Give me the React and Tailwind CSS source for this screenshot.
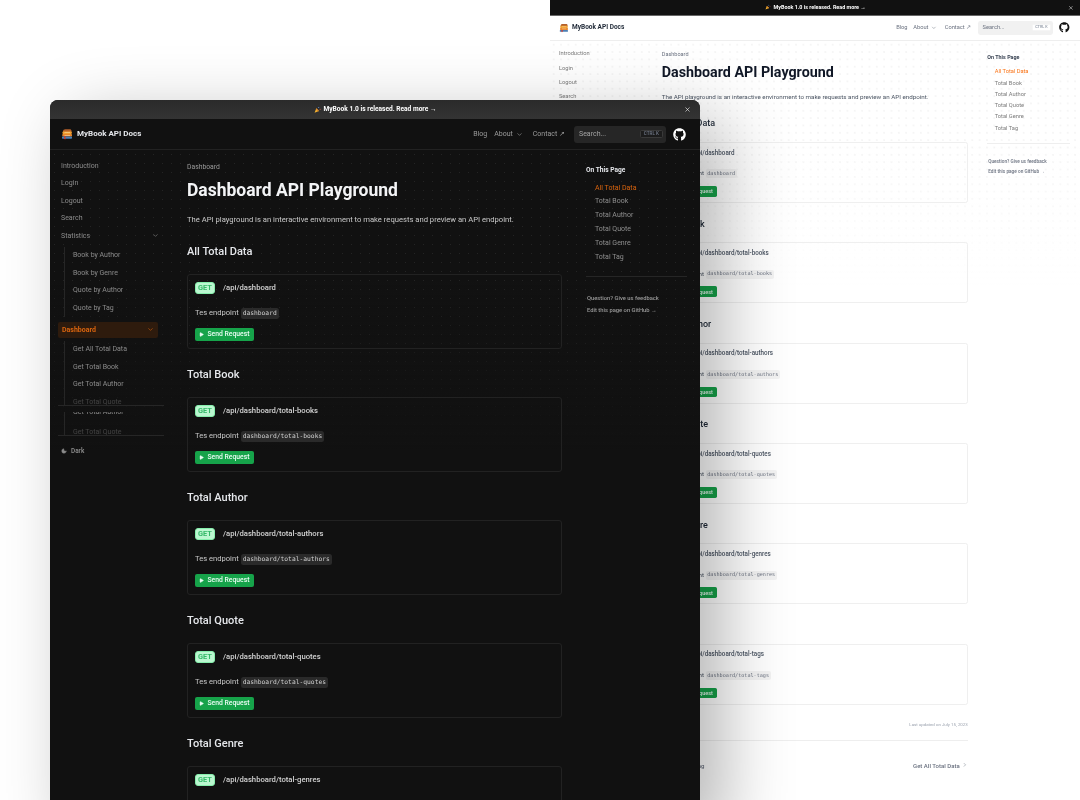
import { ChevronDown, ChevronLeft, ChevronRight, Moon, Play, X } from 'lucide-react'
import { FaGithub } from 'react-icons/fa'

const SECTIONS = [
  { title: 'All Total Data', path: 'dashboard' },
  { title: 'Total Book', path: 'dashboard/total-books' },
  { title: 'Total Author', path: 'dashboard/total-authors' },
  { title: 'Total Quote', path: 'dashboard/total-quotes' },
  { title: 'Total Genre', path: 'dashboard/total-genres' },
  { title: 'Total Tag', path: 'dashboard/total-tags' },
]

const THEMES = {
  dark: {
    shell: 'bg-[#111111]',
    banner: 'bg-[linear-gradient(to_bottom,#2a2a2a,#343434)]',
    nav: 'border-[#222222]',
    brand: 'text-[#e5e7eb]',
    navLink: 'text-[#9a9a9a]',
    search: 'bg-[#262626] text-[#a3a3a3]',
    kbd: 'border-[#3a3a3a] bg-[#1c1c1c] text-[#6b7280]',
    github: 'text-white',
    body: 'bg-[linear-gradient(to_bottom,transparent,transparent_130px,#111111_300px),radial-gradient(circle,#242424_0.6px,transparent_0.9px)]',
    side: 'text-[#8b8b8b]',
    subLine: 'border-[#262626]',
    active: 'bg-[#2e1b0d] text-[#d9640f]',
    rule: 'border-[#262626]',
    crumb: 'text-[#9a9a9a]',
    h1: 'text-[#f3f4f6]',
    text: 'text-[#c9c9c9]',
    h2: 'text-[#e5e7eb]',
    card: 'border-[#222222]',
    path: 'text-[#d4d4d4]',
    code: 'bg-[#2a2a2a] text-[#cfcfcf]',
    tocTitle: 'text-[#e5e7eb]',
    tocLink: 'text-[#8f8f8f]',
    tocActive: 'text-[#d9640f]',
    foot: 'text-[#9a9a9a]',
    muted: 'text-[#6b7280]',
    pager: 'text-[#b8b8b8]',
  },
  light: {
    shell: 'bg-white',
    banner: 'border-b border-[#666666] bg-[#111111]',
    nav: 'border-[#eeeeee]',
    brand: 'text-[#1f2937]',
    navLink: 'text-[#6b7280]',
    search: 'bg-[#f1f1f1] text-[#6b7280]',
    kbd: 'border-[#f5f5f5] bg-white text-[#9ca3af]',
    github: 'text-[#111111]',
    body: 'bg-[linear-gradient(to_bottom,transparent,transparent_130px,#ffffff_300px),radial-gradient(circle,#e4e4e4_0.6px,transparent_0.9px)]',
    side: 'text-[#7b7b7b]',
    subLine: 'border-[#eeeeee]',
    active: 'bg-[#ffedd5] text-[#ea6a12]',
    rule: 'border-[#eeeeee]',
    crumb: 'text-[#6b7280]',
    h1: 'text-[#111827]',
    text: 'text-[#4b5563]',
    h2: 'text-[#1f2937]',
    card: 'border-[#efefef]',
    path: 'text-[#4b5563]',
    code: 'bg-[#f3f3f3] text-[#6b7280]',
    tocTitle: 'text-[#374151]',
    tocLink: 'text-[#7b7b7b]',
    tocActive: 'text-[#f97316]',
    foot: 'text-[#6b7280]',
    muted: 'text-[#9ca3af]',
    pager: 'text-[#6b7280]',
  },
}

function BookLogo() {
  return (
    <svg viewBox="0 0 24 24" className="h-[12px] w-[12px] shrink-0">
      <path d="M4 6.5C4 4 6 2.5 8.5 2.5h9c2 0 3.5 1.2 3.5 3.5v2H4z" fill="#b4602a" />
      <rect x="3" y="7" width="18.5" height="5" rx="1.5" fill="#f0a030" />
      <rect x="2.5" y="12" width="19.5" height="5" rx="1.5" fill="#e8852a" />
      <rect x="2" y="17" width="20" height="4.5" rx="1.5" fill="#4a7fb5" />
      <rect x="7" y="9" width="11" height="1" fill="#fde9c0" />
      <rect x="7" y="14" width="11" height="1" fill="#fde9c0" />
      <path d="M6 17h3v6l-1.500-1.500L6 23z" fill="#d8392b" />
    </svg>
  )
}

function Popper() {
  return (
    <svg viewBox="0 0 12 12" className="h-[7px] w-[7px] shrink-0">
      <path d="M1 11.500 4 4l4.500 4.500z" fill="#f5b32e" />
      <path d="M4 4l4.500 4.500L6.800 9.300 3.400 5.600z" fill="#d9822b" />
      <circle cx="8" cy="2.500" r="1" fill="#5b8dd6" />
      <circle cx="10.500" cy="5.500" r="0.900" fill="#e05c4b" />
    </svg>
  )
}

function SideRow({ children, sub, dim, chevron, t }) {
  return (
    <div className={`flex h-[17.5px] items-center justify-between pr-[5px] text-[7px] ${sub ? 'pl-[8px]' : 'pl-[3px]'} ${dim ? 'opacity-40' : ''} ${t.side}`}>
      <span>{children}</span>
      {chevron && <ChevronDown className="h-[7px] w-[7px]" />}
    </div>
  )
}

function Sidebar({ t }) {
  return (
    <aside className="w-[114px] shrink-0 pl-[8px] pt-[7px]">
      <div className="h-[248px] overflow-hidden">
        {['Introduction', 'Login', 'Logout', 'Search'].map((x) => <SideRow key={x} t={t}>{x}</SideRow>)}
        <SideRow t={t} chevron>Statistics</SideRow>
        <div className={`ml-[6px] mt-[2px] border-l ${t.subLine}`}>
          {['Book by Author', 'Book by Genre', 'Quote by Author', 'Quote by Tag'].map((x) => <SideRow key={x} t={t} sub>{x}</SideRow>)}
        </div>
        <div className={`mt-[5.5px] flex h-[15.5px] w-[100px] items-center justify-between rounded-[2px] px-[4px] text-[7px] font-bold ${t.active}`}>
          <span>Dashboard</span>
          <ChevronDown className="h-[7px] w-[7px]" />
        </div>
        <div className={`ml-[6px] mt-[3px] border-l ${t.subLine}`}>
          {['Get All Total Data', 'Get Total Book', 'Get Total Author'].map((x) => <SideRow key={x} t={t} sub>{x}</SideRow>)}
          <SideRow t={t} sub dim>Get Total Quote</SideRow>
        </div>
      </div>
      {/* second copy of the list peeks out under the first rule */}
      <div className={`h-[31px] border-y pt-[6px] ${t.rule}`}>
        <div className="h-[23px] overflow-hidden">
          <div className={`-mt-[9px] ml-[6px] border-l ${t.subLine}`}>
            <SideRow t={t} sub>Get Total Author</SideRow>
            <div className="pt-[3px]">
              <SideRow t={t} sub dim>Get Total Quote</SideRow>
            </div>
          </div>
        </div>
      </div>
      <div className={`mt-[10.5px] flex items-center gap-[4px] pl-[3px] text-[6.4px] font-semibold ${t.side}`}>
        <Moon className="h-[6px] w-[6px]" fill="currentColor" />
        <span>Dark</span>
      </div>
    </aside>
  )
}

function EndpointCard({ path, t }) {
  return (
    <div className={`mt-[16px] h-[75px] rounded-[3px] border px-[7px] pt-[7px] ${t.card}`}>
      <div className="flex h-[12px] items-center gap-[8px]">
        <span className="flex h-[12px] w-[20px] items-center justify-center rounded-[3px] border border-[#86efac] bg-[#bbf7d0] text-[7.4px] font-bold text-[#34b868]">GET</span>
        <span className={`text-[7.7px] font-medium ${t.path}`}>/api/{path}</span>
      </div>
      <div className="mt-[13px] flex h-[12px] items-center gap-[2px]">
        <span className={`text-[7.6px] ${t.text}`}>Tes endpoint</span>
        <code className={`flex h-[11px] items-center rounded-[2.5px] px-[2px] font-['DejaVu_Sans_Mono',monospace] text-[6.3px] ${t.code}`}>{path}</code>
      </div>
      <button className="mt-[9px] flex h-[13px] w-[59px] items-center justify-center gap-[3px] rounded-[2px] bg-[#16a34a] text-[6.8px] font-medium text-[#ecfdf5]">
        <Play className="h-[5px] w-[5px]" fill="currentColor" />
        Send Request
      </button>
    </div>
  )
}

function Toc({ t }) {
  return (
    <aside className="ml-[24px] w-[101px] shrink-0 pt-[16px]">
      <div className={`text-[6.6px] font-bold leading-[8px] ${t.tocTitle}`}>On This Page</div>
      <div className="mt-[7px] pl-[9px] text-[7px]">
        {SECTIONS.map((s, i) => (
          <div key={s.title} className={`flex h-[13.8px] items-center ${i === 0 ? t.tocActive : t.tocLink}`}>{s.title}</div>
        ))}
      </div>
      <div className={`mt-[12px] border-t ${t.rule}`} />
      <div className={`mt-[15px] pl-[1px] text-[5.8px] font-medium leading-[12.4px] ${t.foot}`}>
        <div>Question? Give us feedback</div>
        <div>Edit this page on GitHub →</div>
      </div>
    </aside>
  )
}

function DocsWindow({ theme, className }) {
  const t = THEMES[theme]
  return (
    <div className={`flex flex-col overflow-hidden font-['Roboto',sans-serif] blur-[0.2px] [will-change:transform] ${t.shell} ${className}`}>
      <div className={`relative flex h-[19px] shrink-0 items-center justify-center gap-[3px] text-[6.6px] font-bold text-white ${t.banner}`}>
        <Popper />
        <span>MyBook 1.0 is released. Read more →</span>
        <X className="absolute right-[9px] top-[6px] h-[7px] w-[7px]" />
      </div>
      <nav className={`flex h-[31px] shrink-0 items-center border-b pl-[11px] pr-[14px] ${t.nav}`}>
        <BookLogo />
        <span className={`ml-[4px] text-[8px] font-bold ${t.brand}`}>MyBook API Docs</span>
        <div className={`ml-auto flex items-center text-[7px] ${t.navLink}`}>
          <span>Blog</span>
          <span className="ml-[7px]">About</span>
          <ChevronDown className="ml-[3px] h-[7px] w-[7px]" />
          <span className="ml-[10px]">Contact ↗</span>
        </div>
        <div className={`ml-[9px] flex h-[17px] w-[92px] items-center justify-between rounded-[3px] pl-[5px] pr-[3px] text-[7px] ${t.search}`}>
          <span>Search...</span>
          <kbd className={`flex h-[8px] items-center rounded-[1.5px] border px-[3px] font-['Roboto',sans-serif] text-[4.6px] font-semibold ${t.kbd}`}>CTRL K</kbd>
        </div>
        <FaGithub className={`ml-[7px] h-[13px] w-[13px] ${t.github}`} />
      </nav>
      <div className={`flex flex-1 bg-[length:100%_100%,9px_9px] ${t.body}`}>
        <Sidebar t={t} />
        <main className="ml-[23px] w-[375px] shrink-0">
          <div className={`mt-[13px] h-[8px] text-[6.8px] leading-[8px] ${t.crumb}`}>Dashboard</div>
          <h1 className={`mt-[8px] h-[22px] text-[17.5px] font-bold leading-[22px] ${t.h1}`}>Dashboard API Playground</h1>
          <p className={`mt-[13px] h-[12px] text-[7.65px] leading-[12px] ${t.text}`}>The API playground is an interactive environment to make requests and preview an API endpoint.</p>
          {SECTIONS.map((s) => (
            <section key={s.title} className="mt-[18px]">
              <h2 className={`h-[14px] text-[11px] font-medium leading-[16px] ${t.h2}`}>{s.title}</h2>
              <EndpointCard path={s.path} t={t} />
            </section>
          ))}
          <div className={`mt-[21px] text-right text-[5.4px] ${t.muted}`}>Last updated on July 15, 2023</div>
          <div className={`mt-[14px] border-t ${t.rule}`} />
          <div className={`mt-[24px] flex items-center justify-between text-[7.4px] font-medium ${t.pager}`}>
            <span className="flex items-center gap-[2px]"><ChevronLeft className="h-[7px] w-[7px]" />Get Total Tag</span>
            <span className="flex items-center gap-[3px]">Get All Total Data<ChevronRight className="h-[7px] w-[7px]" /></span>
          </div>
        </main>
        <Toc t={t} />
      </div>
    </div>
  )
}

export default function App() {
  return (
    <div className="relative h-[800px] w-[1080px] overflow-hidden bg-white">
      <div className="absolute left-[550px] top-0">
        <DocsWindow theme="light" className="h-[984px] w-[651px] [zoom:0.816]" />
      </div>
      <div className="absolute left-[50px] top-[100px] rounded-t-[8px] shadow-[22px_20px_70px_rgba(0,0,0,0.3)]">
        <DocsWindow theme="dark" className="h-[720px] w-[650px] rounded-t-[8px]" />
      </div>
    </div>
  )
}
